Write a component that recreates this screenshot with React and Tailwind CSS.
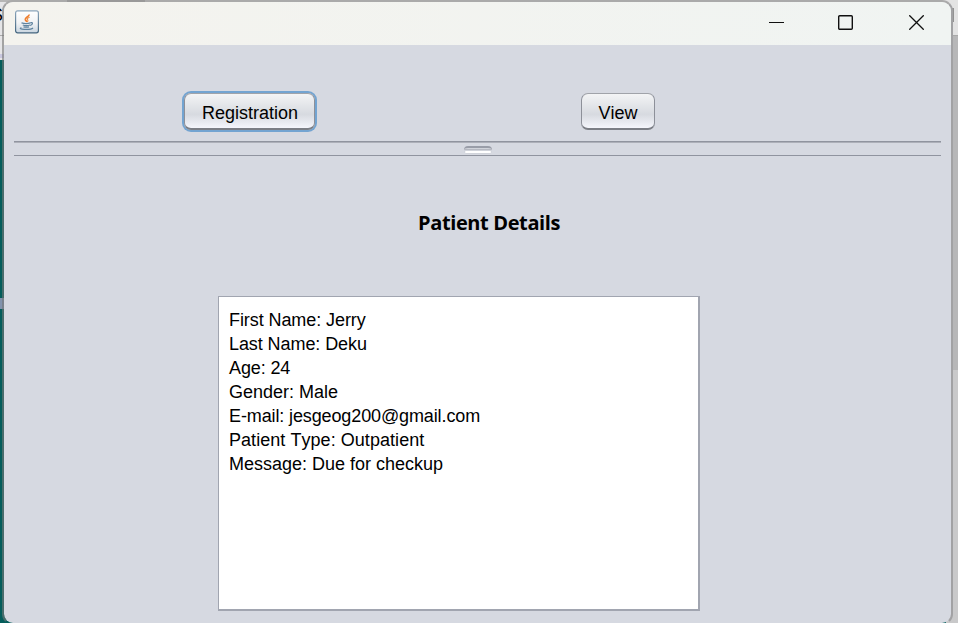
const details = [
  { text: 'First Name: Jerry', tracking: 'tracking-[-0.08px]' },
  { text: 'Last Name: Deku', tracking: 'tracking-[-0.08px]' },
  { text: 'Age: 24', tracking: 'tracking-[-0.12px]' },
  { text: 'Gender: Male', tracking: 'tracking-normal' },
  { text: 'E-mail: jesgeog200@gmail.com', tracking: 'tracking-[-0.12px]' },
  { text: 'Patient Type: Outpatient', tracking: 'tracking-[0.05px]' },
  { text: 'Message: Due for checkup', tracking: 'tracking-normal' },
];

function JavaIcon() {
  return (
    <svg width="24" height="24" viewBox="0 0 24 24" fill="none">
      <defs>
        <linearGradient id="tile" x1="0" y1="0" x2="0" y2="1">
          <stop offset="0" stopColor="#ffffff" />
          <stop offset="0.55" stopColor="#f1f3f5" />
          <stop offset="1" stopColor="#c9d5e0" />
        </linearGradient>
        <linearGradient id="edge" x1="0" y1="0" x2="0" y2="1">
          <stop offset="0" stopColor="#8ba5bb" />
          <stop offset="1" stopColor="#42647e" />
        </linearGradient>
      </defs>
      <rect x="0.6" y="2.6" width="22.8" height="21.2" rx="2" fill="url(#tile)" stroke="url(#edge)" strokeWidth="1.2" transform="translate(0 -1.9) scale(1 1.04)" />
      <path d="M14 4.500c.5 2-4 3-3.700 5 .2 1.100 1.300 1.400 1.500 2.500" stroke="#ee7d2c" strokeWidth="1.7" />
      <path d="M14.600 7.200c-2 .7-3 1.700-1.800 2.900.5.600 0 1.200-.6 1.800" stroke="#f08b3e" strokeWidth="1.1" />
      <path d="M6.500 12.900c2.500.7 6.500.7 9 0M7.800 15c2 .7 5.200.7 7.200 0M8.500 16.800c1.800.5 4 .5 5.600 0" stroke="#5f839f" strokeWidth="1.3" />
      <path d="M15.300 12.700c2.800-.9 2.900 2.100-.2 2.800" stroke="#5f839f" strokeWidth="1.2" />
      <path d="M6.500 17.800c-5.500 1.500 9 2.600 11.500.2" stroke="#5f839f" strokeWidth="1.1" />
    </svg>
  );
}

function TitleBar() {
  return (
    <header className="flex h-[43px] shrink-0 items-start bg-gradient-to-r from-[#f4f3ee] to-[#f0f4f2] pl-[11px] pt-2">
      <JavaIcon />
      <div className="ml-auto flex items-start pr-[27px] pt-[5px] text-[#101010]">
        <svg className="mr-[54px]" width="15" height="15" viewBox="0 0 15 15" shapeRendering="crispEdges">
          <path d="M0 7.500h15" stroke="currentColor" />
        </svg>
        <svg className="mr-14" width="15" height="15" viewBox="0 0 15 15" fill="none">
          <rect x="0.700" y="0.700" width="13.600" height="13.600" rx="1" stroke="currentColor" strokeWidth="1.400" />
        </svg>
        <svg width="15" height="15" viewBox="0 0 15 15" fill="none">
          <path d="M.3.300l14.400 14.400M14.700.300L.3 14.700" stroke="currentColor" strokeWidth="1.300" />
        </svg>
      </div>
    </header>
  );
}

const buttonBase =
  'flex h-[37px] items-center justify-center rounded-[7px] border border-[#8d9099] border-t-[#a0a3a9] border-b-2 border-b-[#7b7e85] bg-gradient-to-b from-[#f3f4f5] via-[#d7dae0] via-60% to-[#f5f6fc] pt-[3px] text-[18px] leading-none text-black';

export default function App() {
  return (
    <div
      className="relative h-[623px] w-[958px] overflow-hidden bg-[#c9c9ca] [font-kerning:none]"
      style={{ fontFamily: '"Liberation Sans", Arial, sans-serif' }}
    >
      {/* Parts of other windows visible around the frame */}
      <div className="absolute left-0 top-0 h-[60px] w-5 bg-[#e5e5e7]" />
      <div className="absolute left-0 top-0 h-[2px] w-full bg-[#b5b5b5]" />
      <div className="absolute left-0 top-[35px] h-px w-4 bg-[#aaaaaa]" />
      <div className="absolute left-0 top-[54px] h-1 w-4 bg-[#c9c7df]" />
      <div className="absolute -left-[9px] top-[5px] text-[18px] leading-5 text-black">S</div>
      <div className="absolute bottom-0 left-0 top-[60px] w-4 bg-[#045d5b]" />
      <div className="absolute bottom-0 left-4 h-1 w-[930px] bg-[#045d5b]" />
      <div className="absolute left-0 top-[298px] h-[11px] w-4 bg-[#8193ad]" />
      <div className="absolute right-0 top-0 h-[35px] w-5 bg-[#e3e3e3]" />
      <div className="absolute right-[4px] top-2 h-[14px] w-2 border-2 border-[#929292]" />
      <div className="absolute right-0 top-[35px] h-px w-2 bg-[#a8a8a8]" />
      <div className="absolute right-0 top-9 h-[334px] w-[5px] bg-[#b7b7b8]" />

      <main className="relative ml-[2px] flex h-[625px] w-[951px] flex-col overflow-hidden rounded-[11px] border-2 border-t-[#aaaaaa] border-r-[#a2a2a4] border-b-transparent border-l-[#777777]/60 bg-[#d6d9e1] bg-clip-padding">
        <TitleBar />
        <nav className="flex h-[96px] shrink-0 items-start pl-[180px] pt-12">
          <button className={buttonBase + ' w-[131px] pl-px ring-2 ring-[#73a4d1]'}>Registration</button>
          <button className={buttonBase + ' ml-[266px] w-[74px]'}>View</button>
        </nav>

        <div className="mx-[10px] flex h-[15px] shrink-0 flex-col items-center border-y border-[#90949f]">
          <div className="h-px w-full shrink-0 bg-[#adb0b9]" />
          <div className="mt-[3px] flex h-2 w-7 shrink-0 flex-col overflow-hidden rounded-[4px] border-t-2 border-[#999da8] bg-[#d0d3da]">
            <div className="mt-px h-px w-full bg-[#b5b8c1]" />
            <div className="mx-auto mt-px h-[2px] w-[26px] rounded-full bg-white" />
          </div>
        </div>

        <section className="flex min-h-0 flex-1 flex-col">
          <h1 className="ml-[414px] mt-[53px] h-7 whitespace-nowrap font-['Open_Sans',sans-serif] text-[20px] font-bold leading-7 tracking-[-0.38px] text-black">
            Patient Details
          </h1>
          <div className="ml-[214px] mt-[59px] h-[315px] w-[482px] shrink-0 border border-b-2 border-r-2 border-[#a1a5b0] bg-white pl-[10px] pt-[11px] text-[18px] leading-6 text-black">
            {details.map(({ text, tracking }) => (
              <p key={text} className={'whitespace-nowrap ' + tracking}>{text}</p>
            ))}
          </div>
        </section>
      </main>
      <div className="absolute left-[67px] top-0 h-[2px] w-[78px] bg-[#999999]" />
    </div>
  );
}
